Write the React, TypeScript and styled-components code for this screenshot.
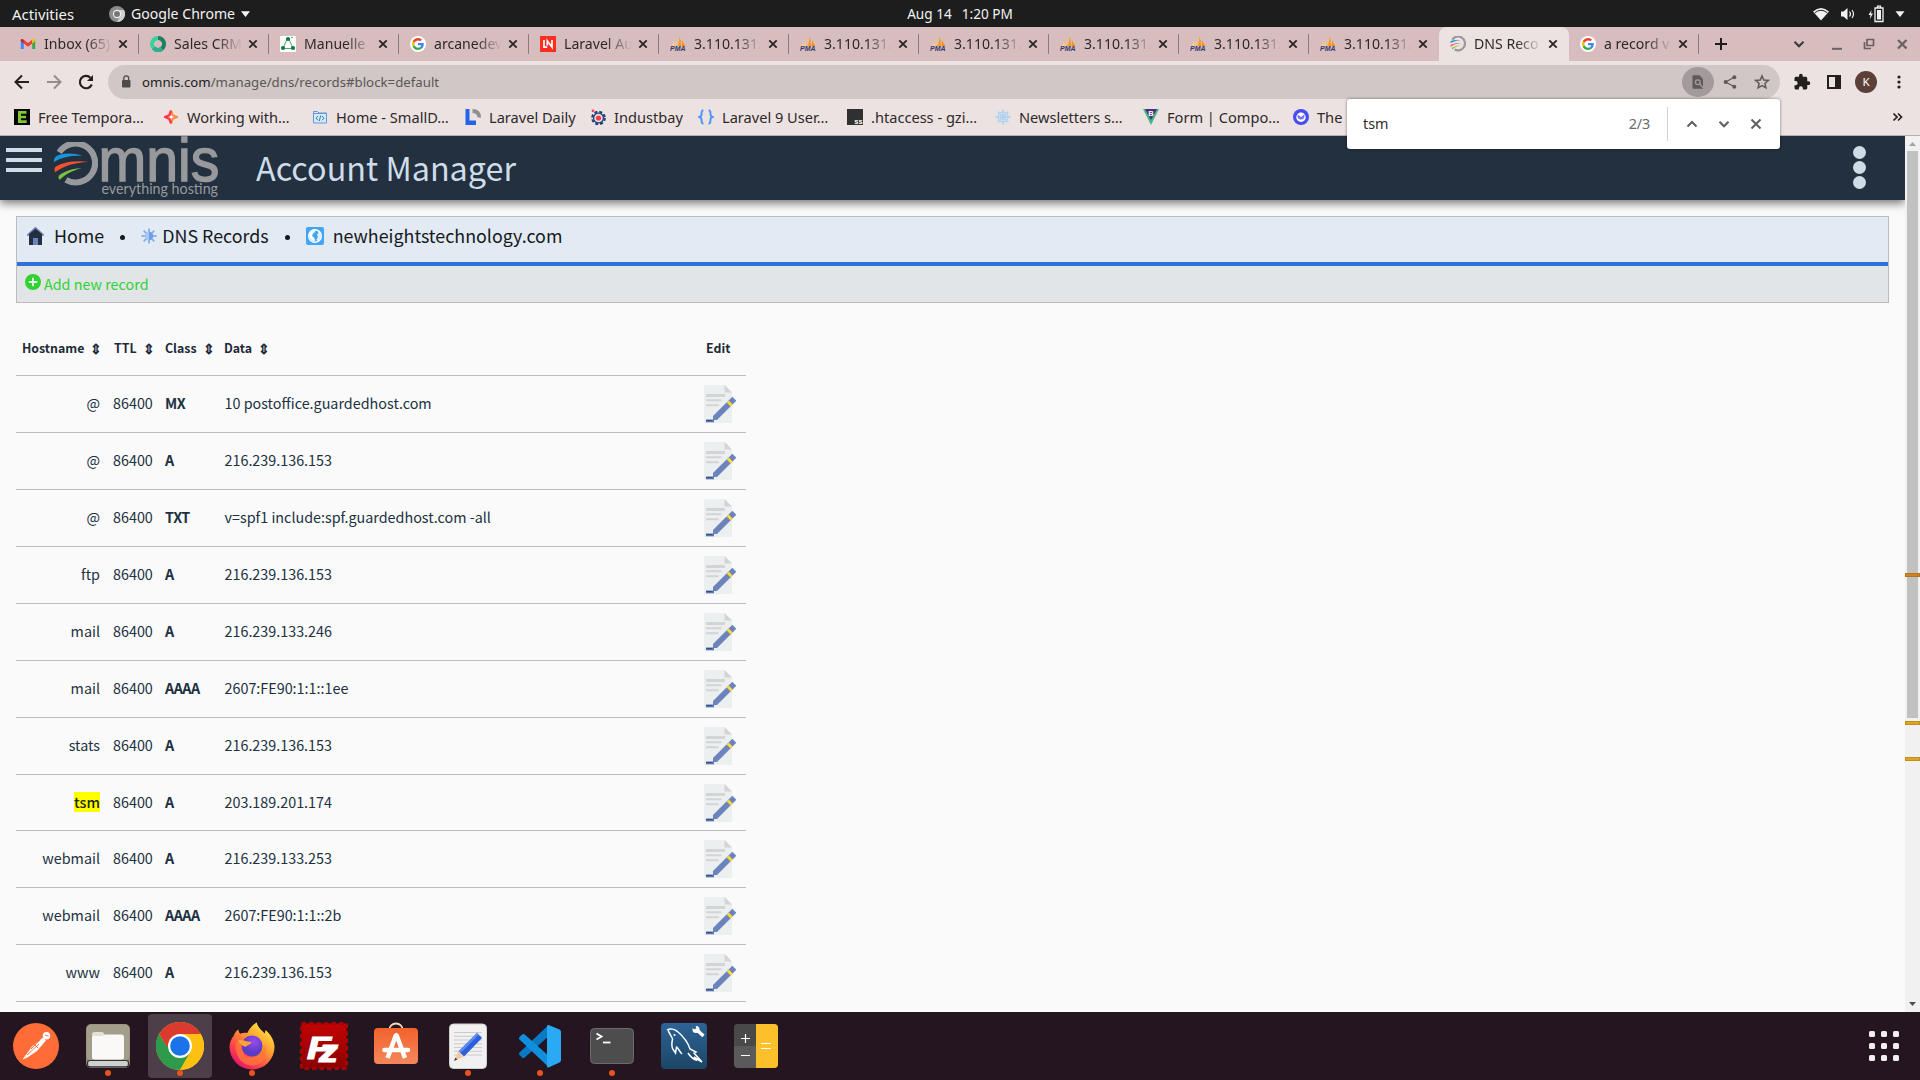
import React, { ReactNode } from 'react';
import styled, { createGlobalStyle, css } from 'styled-components';

const ui = '"Noto Sans", "Open Sans", sans-serif';
const body = '"Noto Sans CJK SC", "Noto Sans", sans-serif';

const GlobalStyle = createGlobalStyle`
  * { box-sizing: border-box; }
  body { margin: 0; overflow: hidden; background: #fafafa; }
  svg { display: block; flex: none; }
`;

const Desktop = styled.div`
  width: 1920px;
  height: 1080px;
  display: flex;
  flex-direction: column;
  overflow: hidden;
  font-family: ${ui};
`;

/* ---------- system bar ---------- */
const SystemBar = styled.header`
  height: 27px;
  flex: none;
  display: grid;
  grid-template-columns: 1fr auto 1fr;
  align-items: center;
  background: #1d1d1d;
  color: #f2f2f2;
  font-size: 14.1px;
  line-height: 24px;
`;
const SystemMenus = styled.div`
  display: flex;
  align-items: center;
  padding-left: 12px;
`;
const Activities = styled.span`
  width: 97px;
  font-size: 14.9px;
`;
const AppMenu = styled.div`
  display: flex;
  align-items: center;
  gap: 6px;
`;
const Clock = styled.div`
  display: flex;
  gap: 10px;
  font-size: 13.6px;
`;
const SystemTray = styled.div`
  display: flex;
  justify-content: flex-end;
  align-items: center;
  gap: 11px;
  padding-right: 15px;
`;

/* ---------- tabs ---------- */
const TabStrip = styled.div`
  height: 34px;
  flex: none;
  display: flex;
  align-items: stretch;
  padding-left: 9px;
  background: #d7bdbd;
`;
const TabBox = styled.div<{ $active?: boolean; $rule?: boolean }>`
  width: 130px;
  flex: none;
  display: flex;
  align-items: center;
  padding: 0 8px 0 11px;
  color: #2d2929;
  ${(p) =>
    p.$active &&
    css`
      background: #ece2e2;
      border-radius: 8px 8px 0 0;
    `}
  ${(p) =>
    p.$rule &&
    css`
      background: linear-gradient(#8d7b7b, #8d7b7b) right 7px / 1px 20px no-repeat;
    `}
`;
const TabTitle = styled.span`
  width: 68px;
  margin-left: 8px;
  margin-right: 3px;
  overflow: hidden;
  white-space: nowrap;
  font-size: 14.1px;
  line-height: 34px;
  mask-image: linear-gradient(to right, #000 62%, transparent 100%);
`;
const TabClose = styled.span`
  display: grid;
  place-items: center;
  width: 16px;
`;
const NewTab = styled.div`
  width: 44px;
  display: grid;
  place-items: center;
`;
const WindowButtons = styled.div`
  margin-left: auto;
  display: flex;
  align-items: center;
  padding-right: 10px;
  gap: 18px;
`;
const TabSearch = styled.div`
  margin-right: 5px;
`;

/* ---------- toolbar ---------- */
const Toolbar = styled.div`
  height: 42px;
  flex: none;
  display: flex;
  align-items: center;
  background: #ece2e2;
  padding: 0 11px 0 12px;
`;
const NavButtons = styled.div`
  display: flex;
  gap: 12px;
  width: 96px;
`;
const Omnibox = styled.div`
  width: 1672px;
  height: 34px;
  flex: none;
  display: flex;
  align-items: center;
  padding: 0 10px 0 11px;
  border-radius: 17px;
  background: #d0c7c6;
`;
const Url = styled.div`
  margin-left: 9px;
  flex: 1;
  font-size: 13.25px;
  line-height: 32px;
  color: #5b5656;
`;
const UrlHost = styled.span`
  color: #232020;
`;
const OmniboxActions = styled.div`
  display: flex;
  align-items: center;
  gap: 16px;
`;
const FindBadge = styled.span`
  width: 32px;
  height: 30px;
  margin-right: -8px;
  border-radius: 50%;
  display: grid;
  place-items: center;
  background: #a39b9b;
`;
const ToolbarActions = styled.div`
  margin-left: auto;
  display: flex;
  align-items: center;
  gap: 12px;
`;
const ExtensionsButton = styled.span`
  margin-right: 2px;
`;
const Avatar = styled.span`
  width: 22px;
  height: 22px;
  border-radius: 50%;
  background: #5c4037;
  color: #fff;
  text-align: center;
  font-size: 11.5px;
  line-height: 22px;
`;

/* ---------- bookmarks ---------- */
const BookmarkBar = styled.nav`
  height: 33px;
  flex: none;
  display: flex;
  align-items: center;
  padding: 0 15px 4px 14px;
  background: #ece2e2;
  border-bottom: 1px solid #b9afaf;
  position: relative;
`;
const BookmarkItem = styled.a<{ $width: number }>`
  width: ${(p) => p.$width}px;
  flex: none;
  display: flex;
  align-items: center;
  gap: 8px;
  white-space: nowrap;
  font-size: 14.6px;
  line-height: 28px;
  color: #2d2929;
`;
const MoreBookmarks = styled.span`
  margin-left: auto;
`;

const FindBar = styled.div`
  position: absolute;
  z-index: 5;
  left: 1347px;
  top: -4px;
  width: 433px;
  height: 50px;
  display: flex;
  align-items: center;
  padding: 0 16px;
  background: #fff;
  border-radius: 3px;
  box-shadow: 0 0 3px rgba(0, 0, 0, 0.5);
  font-size: 14.4px;
  color: #2d2d2d;
`;
const FindQuery = styled.span`
  flex: 1;
  padding-bottom: 2px;
`;
const FindCount = styled.span`
  color: #6b6b6b;
  padding: 0 17px 2px 0;
  letter-spacing: -0.2px;
`;
const FindControls = styled.div`
  height: 34px;
  display: flex;
  align-items: center;
  gap: 16px;
  padding-left: 16px;
  border-left: 1px solid #d2d2d2;
`;

/* ---------- page ---------- */
const Viewport = styled.div`
  height: 876px;
  flex: none;
  display: flex;
  background: #fafafa;
  overflow: hidden;
`;
const Page = styled.div`
  flex: 1;
  font-family: ${body};
  color: #20303f;
`;
const SiteHeader = styled.div`
  height: 64px;
  display: flex;
  align-items: flex-start;
  padding-left: 6px;
  background: #22303f;
  box-shadow: 0 3px 9px rgba(0, 0, 0, 0.55);
`;
const Burger = styled.div`
  width: 36px;
  height: 24px;
  margin: 12px 11px 0 0;
  display: flex;
  flex-direction: column;
  justify-content: space-between;
`;
const BurgerBar = styled.span`
  height: 4px;
  background: #cfdbe5;
`;
const SiteTitle = styled.h1`
  margin: 0 0 0 35px;
  flex: 1;
  font-weight: 400;
  font-size: 32.35px;
  line-height: 61px;
  color: #cfdde9;
`;
const Kebab = styled.div`
  display: flex;
  flex-direction: column;
  gap: 2px;
  margin: 10px 39px 0 0;
`;
const KebabDot = styled.span`
  width: 13px;
  height: 13px;
  border-radius: 50%;
  background: #cfdbe5;
`;

const Panel = styled.section`
  margin: 16px 16px 0;
  height: 87px;
  border: 1px solid #bcbcbc;
`;
const Breadcrumb = styled.div`
  height: 49px;
  display: flex;
  padding-left: 10px;
  background: #e2eaf4;
  border-bottom: 4px solid #2d74d6;
  font-size: 17.85px;
  line-height: 36px;
  color: #16191d;
`;
const Crumb = styled.a<{ $gap: number }>`
  display: flex;
  gap: ${(p) => p.$gap}px;
  & > svg { margin-top: 10px; }
`;
const CrumbDot = styled.span<{ $right: number }>`
  width: 5px;
  height: 5px;
  margin: 18px ${(p) => p.$right}px 0 16px;
  border-radius: 50%;
  background: #16191d;
`;
const AddRecord = styled.a`
  height: 36px;
  display: flex;
  gap: 3px;
  padding-left: 8px;
  background: #e1e5e8;
  color: #2fd32f;
  font-size: 14.35px;
  line-height: 35px;
  & > svg { margin-top: 8px; }
`;

const Table = styled.div`
  width: 730px;
  margin: 16px 0 0 16px;
`;
const Row = styled.div<{ $height: number; $head?: boolean }>`
  height: ${(p) => p.$height}px;
  display: grid;
  grid-template-columns: 84px 65px 59px 480px 42px;
  border-bottom: 1px solid #bebebe;
  font-size: ${(p) => (p.$head ? 12.35 : 14.35)}px;
  font-weight: ${(p) => (p.$head ? 700 : 400)};
  line-height: 54px;
  white-space: nowrap;
`;
const HeadCell = styled.div<{ $indent?: number }>`
  padding: 1px 0 0 ${(p) => p.$indent ?? 0}px;
  display: flex;
  align-items: center;
  gap: 6px;
  color: #1d2b38;
`;
const SortMark = styled.span`
  font-size: 14px;
`;
const HostCell = styled.div`
  text-align: right;
`;
const TtlCell = styled.div`
  padding-left: 13px;
`;
const ClassCell = styled.div`
  font-weight: 700;
  font-size: 14.3px;
  letter-spacing: -0.45px;
`;
const DataCell = styled.div`
  padding-left: 0.5px;
`;
const EditCell = styled.div`
  padding-top: 9px;
`;
const Highlight = styled.mark`
  background: #ff0;
  color: #20260a;
  font-weight: 500;
  line-height: 20px;
  padding: 0;
  display: inline-block;
`;

const ScrollTrack = styled.div`
  width: 15px;
  display: flex;
  flex-direction: column;
  align-items: center;
  background: #f1f1f1;
  position: relative;
`;
const ScrollThumb = styled.div`
  width: 11px;
  height: 567px;
  margin: 5px 0 auto;
  background: #c1c1c1;
`;
const MatchTick = styled.div<{ $top: number; $current?: boolean }>`
  position: absolute;
  left: 0;
  width: 15px;
  height: 4px;
  top: ${(p) => p.$top}px;
  background: ${(p) => (p.$current ? '#cf8419' : '#e0a51c')};
  border: 1px solid ${(p) => (p.$current ? '#b3741c' : '#c08e1c')};
`;

/* ---------- dock ---------- */
const Dock = styled.footer`
  height: 68px;
  flex: none;
  display: flex;
  align-items: center;
  background: #241520;
`;
const DockSlot = styled.div<{ $active?: boolean }>`
  width: 64px;
  height: 64px;
  margin: 0 4px;
  flex: none;
  display: grid;
  grid-template-rows: 8px 48px 8px;
  justify-items: center;
  align-items: center;
  border-radius: 4px;
  background: ${(p) => (p.$active ? '#4c3f49' : 'transparent')};
`;
const RunningDot = styled.span`
  grid-row: 3;
  width: 6px;
  height: 6px;
  margin-top: -3px;
  border-radius: 50%;
  background: #e95420;
`;
const DockIcon = styled.div`
  grid-row: 2;
`;
const AppsGrid = styled.div`
  margin: 0 21px 0 auto;
  display: grid;
  grid-template-columns: repeat(3, 6px);
  gap: 6px;
`;
const AppsCell = styled.span`
  width: 6px;
  height: 6px;
  border-radius: 1.5px;
  background: #f0eeee;
`;

/* ---------- icons ---------- */
const CloseIcon = ({ size = 8, color = '#2b2626', weight = 1.9 }: { size?: number; color?: string; weight?: number }) => (
  <svg width={size} height={size} viewBox="0 0 8 8" stroke={color} strokeWidth={(weight * 8) / size} fill="none" overflow="visible">
    <path d="M0.3 0.3 7.7 7.7M7.7 0.3 0.3 7.7" />
  </svg>
);
const Chevron = ({ up, color = '#5f5f5f' }: { up?: boolean; color?: string }) => (
  <svg width="16" height="16" viewBox="0 0 16 16" fill="none" stroke={color} strokeWidth="2">
    <path d={up ? 'M3.5 10.5 8 6l4.5 4.5' : 'M3.5 5.8 8 10.3l4.5-4.5'} />
  </svg>
);
const Caret = ({ w = 9, h = 6 }: { w?: number; h?: number }) => (
  <svg width={w} height={h} viewBox="0 0 9 6"><path d="M0 .3h9L4.5 6z" fill="#f2f2f2" /></svg>
);
const GoogleG = () => (
  <svg width="16" height="16" viewBox="0 0 16 16">
    <circle cx="8" cy="8" r="8" fill="#fff" />
    <g transform="translate(2 2) scale(.25)">
      <path fill="#EA4335" d="M24 9.5c3.5 0 6.700 1.200 9.200 3.600l6.900-6.900C35.900 2.400 30.500 0 24 0 14.600 0 6.500 5.400 2.600 13.200l8 6.200C12.400 13.700 17.700 9.500 24 9.500z" />
      <path fill="#4285F4" d="M47 24.500c0-1.600-.2-3.100-.4-4.500H24v9h12.900c-.6 3-2.300 5.500-4.800 7.200l7.700 6c4.500-4.200 7.200-10.300 7.200-17.700z" />
      <path fill="#FBBC05" d="M10.500 28.600a14.500 14.500 0 0 1 0-9.200l-8-6.200a24 24 0 0 0 0 21.600z" />
      <path fill="#34A853" d="M24 48c6.500 0 11.900-2.100 15.900-5.800l-7.700-6c-2.200 1.500-4.900 2.300-8.200 2.300-6.300 0-11.600-4.200-13.500-9.900l-8 6.200C6.500 42.600 14.600 48 24 48z" />
    </g>
  </svg>
);
const Gmail = () => (
  <svg width="16" height="16" viewBox="0 0 16 16">
    <path d="M.8 4v9h3V7z" fill="#4285f4" /><path d="M15.200 4v9h-3V7z" fill="#34a853" />
    <path d="M3.800 7.400V3.800L8 7l4.200-3.200v3.600L8 10.700z" fill="#ea4335" />
    <path d="M.8 4.300C.8 2.500 2.500 2.500 3.800 3.800v3.700L.8 5.200z" fill="#c5221f" />
    <path d="M15.200 4.300c0-1.800-1.700-1.800-3-.5v3.700l3-2.300z" fill="#fbbc04" />
  </svg>
);
const SalesRing = () => (
  <svg width="16" height="16" viewBox="0 0 16 16" fill="none" strokeWidth="4">
    <path d="M8 2a6 6 0 1 1-4.200 10.200" stroke="#1f7f66" /><path d="M3.800 12.200A6 6 0 0 1 8 2" stroke="#3ad29f" />
    <path d="M12 12.500A6 6 0 0 1 3.500 12" stroke="#2fae8b" />
  </svg>
);
const Molecule = () => (
  <svg width="16" height="16" viewBox="0 0 16 16">
    <rect width="16" height="16" fill="#fff" />
    <path d="M7 3 3.500 11.500M9 3l3.500 8.500M4 12.500h8" stroke="#35a06a" strokeWidth=".9" />
    <circle cx="8" cy="3" r="2.100" fill="#0c7a3c" /><circle cx="3" cy="12" r="2.100" fill="#0c7a3c" /><circle cx="13" cy="12" r="2.100" fill="#0c7a3c" />
    <circle cx="12" cy="1.500" r=".7" fill="#0c7a3c" />
  </svg>
);
const LaravelNews = () => (
  <svg width="16" height="16" viewBox="0 0 16 16" fill="none" stroke="#fff" strokeWidth="1.700">
    <rect width="16" height="16" fill="#fb2c20" stroke="none" /><path d="M4 4v7.200h3.200M7.300 9.500V4.800l4.700 6.400V4" />
  </svg>
);
const PmaText = styled.text`
  font: italic 700 6.400px "Liberation Sans", sans-serif;
  fill: #34376c;
`;
const Pma = () => (
  <svg width="16" height="16" viewBox="0 0 16 16">
    <path d="M6.500 1C6.300 5 5 8 2 10.300h4.200C7 7.500 7 4 6.500 1z" fill="#f6c583" />
    <path d="M4 4C3.800 7 2.500 9 .8 10.300H4z" fill="#f2cfa3" />
    <path d="M9 .5c.8 4-.2 7-1.700 9.500h4C11.600 6.500 10.500 3 9 .5z" fill="#f89c1e" />
    <path d="M11.800 4c.6 2.500.4 4.500-.2 6.200h4C14 8.500 13 6 11.800 4z" fill="#fb8c0e" />
    <PmaText x="0" y="15.300" textLength="15.500" lengthAdjust="spacingAndGlyphs">PMA</PmaText>
  </svg>
);
const OmnisMark = ({ size = 18, ring = '#98999c' }: { size?: number; ring?: string }) => (
  <svg width={size} height={size} viewBox="0 0 44 44">
    <path d="M5 11.500A20.500 20.500 0 1 1 12 40.500" fill="none" stroke={ring} strokeWidth="6.500" transform="translate(1.500 -.6) scale(.93)" />
    <path d="M.8 19.500C1 15 3 13.500 6.500 12.500c7-1.800 15-1.500 22.500 1.200-10-.8-19 .6-28.200 5.800z" fill="#1796db" />
    <path d="M2 29.500c-1.200-3-.6-4.800 2-6.200 8.500-4 19-5.200 31-3.800C21 20 11 23 2 29.500z" fill="#f4512f" />
    <path d="M6.500 37c-1.500-1.500-1.800-3.500.5-5.200 5.500-4 13-6 21-6.500-9 2.700-16 6-21.500 11.700z" fill="#7cc242" />
  </svg>
);
const LogoWord = styled.text`
  font: 61px "Liberation Sans", sans-serif;
  fill: #98999c;
  stroke: #98999c;
  stroke-width: 1.400px;
`;
const LogoTag = styled.text`
  font: 14.500px Lato, sans-serif;
  fill: #98999c;
`;
const OmnisLogo = () => (
  <svg width="168" height="64" viewBox="0 0 168 64">
    <g transform="translate(0 6)"><OmnisMark size={45} /></g>
    <LogoWord x="45.500" y="45" textLength="121" lengthAdjust="spacingAndGlyphs">mnis</LogoWord>
    <LogoTag x="48.500" y="58.300" textLength="116.500" lengthAdjust="spacingAndGlyphs">everything hosting</LogoTag>
  </svg>
);
const EditIcon = () => (
  <svg width="33" height="39" viewBox="0 0 33 39">
    <path d="M0 0h20.500L28 7.500V38H0z" fill="#eceff0" /><path d="M20.500 0v7.500H28z" fill="#d2d4d5" />
    <path d="M2 9h19v3H2zM2 14.300h15.500v2H2zM2 19.200h12.500v2H2z" fill="#d2d4d5" />
    <path d="M9 31 28.300 11.800l4 4L13 35H9z" fill="#6c84bb" /><path d="M22.700 17.500l2-2 4 4-2 2z" fill="#fcd93a" />
    <path d="M2 34.500h8v2.800H2z" fill="#5b74ad" /><path d="M2 35.500h6" stroke="#34518c" />
  </svg>
);
const HomeIcon = () => (
  <svg width="17" height="18" viewBox="0 0 17 18">
    <path d="M8.500 2 15 7.500V18H2V7.500z" fill="#22303f" /><path d="M6 11h5v7H6z" fill="#6c84bb" />
    <path d="M.3 8.500 8.500 1l8.200 7.500" stroke="#6c84bb" strokeWidth="2" fill="none" />
    <path d="M2.500 8 8.500 3l6 5" stroke="#22303f" strokeWidth="2" fill="none" />
  </svg>
);
const GearIcon = () => (
  <svg width="16" height="18" viewBox="-8 -9 16 18">
    {[0, 45, 90, 135, 180, 225, 270, 315].map((a) => (
      <path key={a} d="M0-3v-4.500" stroke="#84adea" strokeWidth="1.800" transform={`rotate(${a})`} />
    ))}
    <circle r="4.200" fill="#a9c6f3" /><path d="M0-4.200a4.200 4.200 0 0 1 0 8.400z" fill="#6f9fe8" />
  </svg>
);
const GlobeIcon = () => (
  <svg width="18" height="18" viewBox="0 0 18 18">
    <rect width="18" height="18" rx="2" fill="#42a5f5" /><circle cx="9" cy="9" r="6.300" fill="none" stroke="#fff" strokeWidth="1.400" />
    <path d="M3.500 6 6 3l3.500-.5L9 5 7 6.500 6 9l2 1.500 1 2.500-1 2-3.500-3L3 9z" fill="#fff" />
    <path d="M11 3l3 2.500L15 9l-2 4-2 1.500-.5-2L12 10l-1-2.500L12.500 6z" fill="#fff" opacity=".85" />
  </svg>
);
const PlusIcon = () => (
  <svg width="16" height="16" viewBox="0 0 16 16"><circle cx="8" cy="8" r="8" fill="#2fd32f" /><path d="M8 3.700v8.600M3.700 8h8.600" stroke="#e9f5ea" strokeWidth="1.800" /></svg>
);
const FaviconText = styled.text<{ $size: number; $fill: string }>`
  font: 700 ${(p) => p.$size}px "Liberation Sans", sans-serif;
  fill: ${(p) => p.$fill};
  text-anchor: middle;
`;
const bookmarkIcons: Record<string, ReactNode> = {
  e: <><rect width="16" height="16" fill="#050505" /><path d="M4 2h8.500v2.700H7v2h5v2.600H7v2h5.700V14H4z" fill="#7fc832" /></>,
  star: <><path d="M8 2 9.700 6.300 14 8l-4.300 1.700L8 14 6.300 9.700 2 8l4.300-1.700z" fill="#fff" stroke="#ff8a4a" strokeWidth="2.300" strokeLinejoin="round" /><path d="M8 2 6.300 6.300 2 8l4.300 1.700L8 14" fill="none" stroke="#f9384f" strokeWidth="2.300" strokeLinejoin="round" /></>,
  code: <><path d="M1.500 2.500h4l1.500 1.500h7.500v10h-13z" fill="#dbe9f7" stroke="#5f9bd8" /><path d="M1.500 4.500h13" stroke="#5f9bd8" /><path d="M6 7 4 9.200l2 2.200M10 7l2 2.200-2 2.200M8.700 6.500 7.300 12" fill="none" stroke="#2e7cc9" /></>,
  daily: <><path d="M.5 0h4v11.500H11V16H.5z" fill="#2563eb" /><path d="M7.500 0C13 0 16 3 16 8.500h-3.500C12.500 5.500 10.500 4 7.500 4z" fill="#8f8f8f" /></>,
  bay: <><circle cx="8.500" cy="9" r="6.300" fill="none" stroke="#1d3f7a" strokeWidth="2" strokeDasharray="3 1.950" /><circle cx="8.500" cy="9" r="4.900" fill="none" stroke="#1d3f7a" strokeWidth="1.300" /><circle cx="8.500" cy="9" r="2.600" fill="#ff3b44" /><circle cx="3" cy="1.800" r="1.400" fill="#ff3b44" /></>,
  braces: <path d="M5.500 1.500C3.500 1.500 3.600 2.500 3.600 4.500S3.300 7.500 1.500 8c1.800.5 2.100 1.500 2.100 3.500s-.1 3 1.900 3M10.500 1.500c2 0 1.900 1 1.900 3s.3 3 2.100 3.500c-1.800.5-2.100 1.500-2.100 3.500s.1 3-1.900 3" fill="none" stroke="#4c93fb" strokeWidth="1.900" />,
  gist: <><rect width="16" height="16" fill="#303030" /><FaviconText $size={7.5} $fill="#fff" x="11.500" y="14.500">ss</FaviconText></>,
  wheel: <g fill="none" stroke="#aed4f2" strokeWidth="1.300"><circle cx="8" cy="8" r="5" /><circle cx="8" cy="8" r="2" /><path d="M8 0v16M0 8h16M2.500 2.500l11 11M13.500 2.500l-11 11" /></g>,
  form: <><path d="M0 0h4.500L8 7l3.500-7H16L8 16z" fill="#41b883" /><path d="M2 0h12L8 11z" fill="#4b2e83" /><FaviconText $size={7.500} $fill="#fff" x="8" y="7">B</FaviconText></>,
  bot: <><circle cx="8" cy="8" r="8" fill="#4a4bf5" /><circle cx="8" cy="8.300" r="4.700" fill="#fff" /><path d="M4.800 5.500 8 8l3.200-2.500c1 3.500-.8 5-3.200 5s-4.200-1.500-3.200-5z" fill="#4a4bf5" opacity=".75" /></>,
};
const Favicon = ({ name }: { name: string }) => (
  <svg width="16" height="16" viewBox="0 0 16 16">{bookmarkIcons[name]}</svg>
);

const FzText = styled.text`
  font: italic 700 31px "Liberation Sans", sans-serif;
  fill: #fff;
  stroke: #fff;
  stroke-width: 1.200px;
`;
const dockIcons: Record<string, ReactNode> = {
  postman: <>
    <circle cx="24" cy="24" r="23" fill="#ff6c37" /><circle cx="34.500" cy="13.800" r="3.700" fill="#fff" />
    <path d="M31 15.500l3 3-9 10.500-9.500 6.500-5 2 2.500-3.500 7-9.500z" fill="#fff" />
    <path d="M33 13l3.500 1M19 27l9-9M15 33l12-11M22 22l4 4" stroke="#ff6c37" strokeWidth=".9" />
  </>,
  files: <>
    <rect x="2" y="2" width="44" height="44" rx="5" fill="#8f8a78" /><rect x="2.500" y="2.500" width="43" height="36" rx="5" fill="#a39d8b" />
    <path d="M8 12.500q0-2.500 2.500-2.500h8l3.500 3.500v4H8z" fill="#e4e1d6" /><path d="M8 16q0-2 2-2h9l3-1.500h15.500q2.500 0 2.500 2.500v20q0 2.500-2.500 2.500h-27Q8 37.500 8 35z" fill="#faf9f7" />
    <rect x="3.500" y="38.500" width="41" height="6.300" rx="2.500" fill="#cfcfcf" stroke="#333" strokeWidth="1.200" />
  </>,
  chrome: <>
    <circle cx="24" cy="24" r="24" fill="#fdc013" />
    <path d="M3.200 12A24 24 0 0 1 44.800 12H24L13.600 30z" fill="#db3a2e" />
    <path d="M3.200 12A24 24 0 0 0 24 48l10.400-18L24 24H10.200z" fill="#2e9a4b" />
    <path d="M44.800 12H24v12l10.400 6L24 48A24 24 0 0 0 44.800 12z" fill="#fdc013" />
    <circle cx="24" cy="24" r="12" fill="#fff" /><circle cx="24" cy="24" r="9.800" fill="#1a73e8" />
  </>,
  firefox: <>
    <defs>
      <linearGradient id="ffx" x1=".85" y1=".1" x2=".2" y2=".95"><stop offset="0" stopColor="#ffe63d" /><stop offset=".4" stopColor="#ff9530" /><stop offset=".7" stopColor="#ff4a48" /><stop offset="1" stopColor="#e2126e" /></linearGradient>
      <radialGradient id="ffp" cx=".6" cy=".3"><stop offset="0" stopColor="#9a4bf0" /><stop offset="1" stopColor="#5b3cc4" /></radialGradient>
    </defs>
    <path d="M5.500 14C7 10 9 8.300 10.500 7.500c0 2 .8 3.200 1.800 4.300 2-.8 4.500-1.200 7-.8 2-4.500 5.500-8.500 9.500-10.500 1 5.500 5.500 8 8 11l.7-3.500c5.500 4.500 9 11 9 17A22.500 22.500 0 0 1 1.500 25c0-4 1.500-8 4-11z" fill="url(#ffx)" />
    <circle cx="24" cy="24" r="10.500" fill="url(#ffp)" />
    <path d="M8 21c2.500-3 6-4 9-2.500-3 2.500-4 6-3 9.500 1.500 5 5.500 7.500 10 7.300 7-.3 12-5 12-12.300 5 10-1 20.500-12 20.500S6 32 8 21z" fill="#ff7a38" opacity=".75" />
    <path d="M10 18.500c4-1 6.500 1 13.500 1.500.5 2-4.500 3-6 5-3-1-6-3.500-7.500-6.500z" fill="#ffa436" />
  </>,
  filezilla: <>
    <defs><linearGradient id="fz" x1="0" y1="0" x2="0" y2="1"><stop offset="0" stopColor="#c20303" /><stop offset="1" stopColor="#8b0000" /></linearGradient></defs>
    <rect x="1.500" y="1.500" width="45" height="45" fill="url(#fz)" stroke="#a80202" strokeWidth="3" strokeDasharray="4.500 3" />
    <FzText x="7" y="37" textLength="24" lengthAdjust="spacingAndGlyphs">F</FzText>
    <FzText x="19" y="39.500" textLength="19" lengthAdjust="spacingAndGlyphs">z</FzText>
  </>,
  software: <>
    <defs><linearGradient id="sw" x1="0" y1="0" x2="0" y2="1"><stop offset="0" stopColor="#f2622d" /><stop offset="1" stopColor="#f4875a" /></linearGradient></defs>
    <path d="M17 9c0-10 14-10 14 0" fill="none" stroke="#f3d9b4" strokeWidth="1.800" />
    <rect x="2" y="6" width="44" height="36" rx="4" fill="url(#sw)" />
    <path d="M15.500 36 24 13h.5L33 36" fill="none" stroke="#fff" strokeWidth="4.500" strokeLinejoin="bevel" /><path d="M12.500 28h23.500" stroke="#fff" strokeWidth="4.500" strokeLinecap="round" />
  </>,
  editor: <>
    <rect x="5.500" y="2" width="37" height="44.500" rx="4" fill="#f1f1f1" stroke="#cfcfcf" />
    <path d="M10 10.500h28M10 14.300h28M10 18h28M10 21.800h28M10 25.500h28M10 29.300h28M10 33h28" stroke="#cbcbcb" />
    <path d="M33 11l5 5-18 18.500-5.500-5z" fill="#2d5fdc" /><path d="M33 11l1.800 1.800-18 18-2.300-1.300z" fill="#5d8bf0" />
    <path d="M14.500 29.500l5.500 5L10 39z" fill="#f4c9a0" /><path d="M11.300 35.500 10 39l3.500-1.500z" fill="#444" />
  </>,
  vscode: <>
    <path d="M32.500 3 3.500 30.500q-1.200 1.200 0 2.500l2.700 2.500q1.300 1 2.500 0L34 13z" fill="#0a79c4" />
    <path d="M32.500 45 3.500 17.500q-1.200-1.200 0-2.500l2.700-2.500q1.300-1 2.500 0L34 35z" fill="#1090dc" />
    <path d="M32.500 3 43.500 7.500q1.500.8 1.500 2.500v28q0 1.700-1.500 2.500L32.500 45.500q-1.500.5-1.500-1.500V4.500q0-2 1.500-1.500z" fill="#2aaaf4" />
  </>,
  terminal: <>
    <rect x="2.500" y="6.500" width="43" height="35" rx="4" fill="#4d4d4d" stroke="#6b6b6b" />
    <path d="M8.500 11.500 13.500 14.500 8.500 17.500" fill="none" stroke="#fff" strokeWidth="1.900" /><path d="M15 20.500h7.500" stroke="#fff" strokeWidth="1.800" />
  </>,
  mysql: <>
    <defs><linearGradient id="my" x1="0" y1="0" x2="0" y2="1"><stop offset="0" stopColor="#2d6397" /><stop offset="1" stopColor="#1c4564" /></linearGradient></defs>
    <rect x="1" y="1" width="46" height="46" rx="4" fill="url(#my)" />
    <path d="M7 8c3-2 8-1 11 2 6 5 10 11 12 17l6 3-2 1 8 9-8-5 2 3c-4-1-6-4-8-7M8 7c0 4 4 7 4.500 10-1 5-1 9 1 11l2 3 1-6c2 1 3 5 5.500 7" fill="none" stroke="#fff" strokeWidth="1.500" />
    <circle cx="14.500" cy="13" r="1" fill="#fff" /><path d="M36.500 7.500l7 6.500" stroke="#fff" strokeWidth="3.300" /><circle cx="36" cy="7.500" r="3.500" fill="#fff" /><circle cx="34.500" cy="5.500" r="1.700" fill="#2b6093" />
  </>,
  calc: <>
    <rect x="2" y="2" width="44" height="44" rx="4" fill="#5a5a5a" /><path d="M2 6q0-4 4-4h18v22H2z" fill="#494949" />
    <path d="M24 2h18q4 0 4 4v36q0 4-4 4H24z" fill="#fdbf2a" /><path d="M13.500 12v9M9 16.500h9M9 33.500h9M29 21.500h10M29 26.500h10" stroke="#fff" strokeWidth="1.200" />
  </>,
};

/* ---------- data ---------- */
const tabs: { icon: ReactNode; title: string; active?: boolean; rule?: boolean }[] = [
  { icon: <Gmail />, title: 'Inbox (65)', rule: true },
  { icon: <SalesRing />, title: 'Sales CRM', rule: true },
  { icon: <Molecule />, title: 'Manuelle', rule: true },
  { icon: <GoogleG />, title: 'arcanedev', rule: true },
  { icon: <LaravelNews />, title: 'Laravel Au', rule: true },
  ...Array.from({ length: 6 }, (_, i) => ({ icon: <Pma />, title: '3.110.131.', rule: i < 5 })),
  { icon: <OmnisMark size={16} />, title: 'DNS Reco', active: true },
  { icon: <GoogleG />, title: 'a record v', rule: true },
];
const bookmarks: [string, string, number][] = [
  ['e', 'Free Tempora…', 149],
  ['star', 'Working with…', 149],
  ['code', 'Home - SmallD…', 153],
  ['daily', 'Laravel Daily', 125],
  ['bay', 'Industbay', 108],
  ['braces', 'Laravel 9 User…', 149],
  ['gist', '.htaccess - gzi…', 148],
  ['wheel', 'Newsletters s…', 148],
  ['form', 'Form | Compo…', 150],
  ['bot', 'The', 60],
];
const records: [string, string, string][] = [
  ['@', 'MX', '10 postoffice.guardedhost.com'],
  ['@', 'A', '216.239.136.153'],
  ['@', 'TXT', 'v=spf1 include:spf.guardedhost.com -all'],
  ['ftp', 'A', '216.239.136.153'],
  ['mail', 'A', '216.239.133.246'],
  ['mail', 'AAAA', '2607:FE90:1:1::1ee'],
  ['stats', 'A', '216.239.136.153'],
  ['tsm', 'A', '203.189.201.174'],
  ['webmail', 'A', '216.239.133.253'],
  ['webmail', 'AAAA', '2607:FE90:1:1::2b'],
  ['www', 'A', '216.239.136.153'],
];
const dock: [string, boolean][] = [
  ['postman', false], ['files', true], ['chrome', true], ['firefox', true], ['filezilla', false], ['software', false],
  ['editor', true], ['vscode', true], ['terminal', true], ['mysql', false], ['calc', false],
];

export default function App() {
  return (
    <Desktop>
      <GlobalStyle />
      <SystemBar>
        <SystemMenus>
          <Activities>Activities</Activities>
          <AppMenu>
            <svg width="16" height="16" viewBox="0 0 16 16">
              <circle cx="8" cy="8" r="8" fill="#8c8c8c" /><path d="M8 4h7a8 8 0 0 1-7 12l3.500-6z" fill="#d0d0d0" />
              <circle cx="8" cy="8" r="4.200" fill="#eee" /><circle cx="8" cy="8" r="3" fill="#777" />
            </svg>
            <span>Google Chrome</span>
            <Caret />
          </AppMenu>
        </SystemMenus>
        <Clock><span>Aug 14</span><span>1:20 PM</span></Clock>
        <SystemTray>
          <svg width="16" height="14" viewBox="0 0 16 14"><path d="M0 4.500Q8-2.500 16 4.500L8 13.500z" fill="#f2f2f2" /><path d="M1.800 5.700Q8 .8 14.200 5.700" stroke="#1d1d1d" fill="none" strokeWidth="1" /></svg>
          <svg width="17" height="14" viewBox="0 0 17 14"><path d="M1 4.500h2.500L7.500 1v12L3.500 9.500H1z" fill="#f2f2f2" /><path d="M9.500 4.500q2 2.500 0 5M12 3q3 4 0 8" fill="none" stroke="#f2f2f2" strokeWidth="1.200" /></svg>
          <svg width="16" height="18" viewBox="0 0 16 18"><path d="M3.500 5 .5 10h2l-.7 4L5 8.500H3z" fill="#f2f2f2" /><path d="M7 3h8v13.500H7zM9.500 1.200h3V3h-3z" fill="none" stroke="#f2f2f2" strokeWidth="1.300" /><path d="M9 5h4v9.500H9z" fill="#f2f2f2" /></svg>
          <Caret w={10} />
        </SystemTray>
      </SystemBar>

      <TabStrip>
        {tabs.map((t, i) => (
          <TabBox key={i} $active={t.active} $rule={t.rule}>
            {t.icon}
            <TabTitle>{t.title}</TabTitle>
            <TabClose><CloseIcon /></TabClose>
          </TabBox>
        ))}
        <NewTab><svg width="12" height="12" viewBox="0 0 12 12"><path d="M6 0v12M0 6h12" stroke="#1f1b1b" strokeWidth="2" /></svg></NewTab>
        <WindowButtons>
          <TabSearch><Chevron color="#3c3636" /></TabSearch>
          <svg width="14" height="14" viewBox="0 0 14 14"><path d="M2 11.800h10" stroke="#6b6161" strokeWidth="2" /></svg>
          <svg width="14" height="14" viewBox="0 0 14 14" fill="none" stroke="#6b6161" strokeWidth="1.700"><path d="M5 2.500h6.500v6H5z" /><path d="M2.500 5v6.500H9" /></svg>
          <svg width="16" height="16" viewBox="0 0 16 16"><path d="M4 4l8.500 8.500M12.500 4 4 12.500" stroke="#6b6161" strokeWidth="2.300" /></svg>
        </WindowButtons>
      </TabStrip>

      <Toolbar>
        <NavButtons>
          <svg width="20" height="20" viewBox="0 0 20 20" fill="none" stroke="#231f1f" strokeWidth="2"><path d="M17 10H4M10 3.500 3.500 10l6.500 6.500" /></svg>
          <svg width="20" height="20" viewBox="0 0 20 20" fill="none" stroke="#958d8d" strokeWidth="2"><path d="M3 10h13M10 3.500 16.500 10 10 16.500" /></svg>
          <svg width="20" height="20" viewBox="0 0 20 20" fill="none" stroke="#231f1f" strokeWidth="2.100"><path d="M15.800 12.500A6.200 6.200 0 1 1 14.500 5.700" /><path d="M17 3v6h-6z" fill="#231f1f" stroke="none" /></svg>
        </NavButtons>
        <Omnibox>
          <svg width="14" height="16" viewBox="0 0 14 16"><rect x="3" y="6" width="8.500" height="7.500" rx="1" fill="#504b4b" /><path d="M4.800 6.500V4.300a2.450 2.450 0 0 1 4.900 0v2.200" fill="none" stroke="#504b4b" strokeWidth="1.300" /></svg>
          <Url><UrlHost>omnis.com</UrlHost>/manage/dns/records#block=default</Url>
          <OmniboxActions>
            <FindBadge><svg width="16" height="16" viewBox="0 0 16 16"><path d="M3.500 1.300h6L13 5v9.700H3.500Q2.500 14.700 2.500 13.700V2.300Q2.500 1.300 3.500 1.300z" fill="#5f5a5a" /><circle cx="7.800" cy="8.200" r="2.400" fill="none" stroke="#a39b9b" strokeWidth="1.300" /><path d="M9.500 10l3.500 3.700" stroke="#a39b9b" strokeWidth="1.300" /></svg></FindBadge>
            <svg width="16" height="16" viewBox="0 0 16 16" fill="#5f5a5a"><circle cx="3.600" cy="8" r="2" /><circle cx="12.300" cy="3.200" r="2" /><circle cx="12.300" cy="12.800" r="2" /><path d="M12.300 3.200 3.600 8l8.700 4.800" fill="none" stroke="#5f5a5a" strokeWidth="1.300" /></svg>
            <svg width="16" height="16" viewBox="0 0 16 16"><path d="M8 1.900l1.800 4.100 4.500.4-3.400 3 1 4.400L8 11.500l-3.900 2.300 1-4.400-3.400-3L6.200 6z" fill="none" stroke="#5f5a5a" strokeWidth="1.500" /></svg>
          </OmniboxActions>
        </Omnibox>
        <ToolbarActions>
          <ExtensionsButton>
            <svg width="18" height="18" viewBox="0 0 24 24"><path fill="#231f1f" d="M20.500 11H19V7c0-1.100-.9-2-2-2h-4V3.500a2.500 2.500 0 0 0-5 0V5H4c-1.100 0-2 .9-2 2v3.800h1.500a2.700 2.700 0 0 1 0 5.400H2V20c0 1.100.9 2 2 2h3.800v-1.500a2.700 2.700 0 0 1 5.400 0V22H17c1.100 0 2-.9 2-2v-4h1.500a2.500 2.500 0 0 0 0-5z" /></svg>
          </ExtensionsButton>
          <svg width="18" height="18" viewBox="0 0 18 18"><path d="M3 3h12v12H3z" fill="none" stroke="#231f1f" strokeWidth="2" /><path d="M10 3h5v12h-5z" fill="#231f1f" /></svg>
          <Avatar>K</Avatar>
          <svg width="20" height="18" viewBox="0 0 20 18" fill="#231f1f"><circle cx="10" cy="4" r="1.600" /><circle cx="10" cy="9" r="1.600" /><circle cx="10" cy="14" r="1.600" /></svg>
        </ToolbarActions>
      </Toolbar>

      <BookmarkBar>
        {bookmarks.map(([icon, label, width]) => (
          <BookmarkItem key={label} $width={width}><Favicon name={icon} />{label}</BookmarkItem>
        ))}
        <MoreBookmarks>
          <svg width="16" height="16" viewBox="0 0 16 16" fill="none" stroke="#231f1f" strokeWidth="1.700"><path d="M4.500 4.500 8 8l-3.500 3.500M9 4.500 12.500 8 9 11.500" /></svg>
        </MoreBookmarks>
        <FindBar>
          <FindQuery>tsm</FindQuery>
          <FindCount>2/3</FindCount>
          <FindControls><Chevron up /><Chevron /><svg width="16" height="16" viewBox="0 0 16 16"><path d="M3.500 3.500l9 9M12.500 3.500l-9 9" stroke="#5f5f5f" strokeWidth="2" /></svg></FindControls>
        </FindBar>
      </BookmarkBar>

      <Viewport>
        <Page>
          <SiteHeader>
            <Burger><BurgerBar /><BurgerBar /><BurgerBar /></Burger>
            <OmnisLogo />
            <SiteTitle>Account Manager</SiteTitle>
            <Kebab><KebabDot /><KebabDot /><KebabDot /></Kebab>
          </SiteHeader>
          <Panel>
            <Breadcrumb>
              <Crumb $gap={10}><HomeIcon />Home</Crumb>
              <CrumbDot $right={16} />
              <Crumb $gap={5}><GearIcon />DNS Records</Crumb>
              <CrumbDot $right={16} />
              <Crumb $gap={9}><GlobeIcon />newheightstechnology.com</Crumb>
            </Breadcrumb>
            <AddRecord><PlusIcon />Add new record</AddRecord>
          </Panel>
          <Table>
            <Row $height={57} $head>
              <HeadCell $indent={6}>Hostname<SortMark>⇕</SortMark></HeadCell>
              <HeadCell $indent={14}>TTL<SortMark>⇕</SortMark></HeadCell>
              <HeadCell>Class<SortMark>⇕</SortMark></HeadCell>
              <HeadCell>Data<SortMark>⇕</SortMark></HeadCell>
              <HeadCell $indent={2}>Edit</HeadCell>
            </Row>
            {records.map(([host, kind, data], i) => (
              <Row key={i} $height={host === 'tsm' ? 56 : 57}>
                <HostCell>{host === 'tsm' ? <Highlight>{host}</Highlight> : host}</HostCell>
                <TtlCell>86400</TtlCell>
                <ClassCell>{kind}</ClassCell>
                <DataCell>{data}</DataCell>
                <EditCell><EditIcon /></EditCell>
              </Row>
            ))}
          </Table>
        </Page>
        <ScrollTrack>
          <svg width="15" height="10" viewBox="0 0 15 10"><path d="M4 10l3.500-4L11 10z" fill="#a3a3a3" /></svg>
          <ScrollThumb />
          <svg width="15" height="11" viewBox="0 0 15 11"><path d="M4 1h7L7.500 5z" fill="#505050" /></svg>
          <MatchTick $top={437} $current />
          <MatchTick $top={585} />
          <MatchTick $top={621} />
        </ScrollTrack>
      </Viewport>

      <Dock>
        {dock.map(([name, running]) => (
          <DockSlot key={name} $active={name === 'chrome'}>
            <DockIcon><svg width="48" height="48" viewBox="0 0 48 48">{dockIcons[name]}</svg></DockIcon>
            {running && <RunningDot />}
          </DockSlot>
        ))}
        <AppsGrid>{Array.from({ length: 9 }, (_, i) => <AppsCell key={i} />)}</AppsGrid>
      </Dock>
    </Desktop>
  );
}
